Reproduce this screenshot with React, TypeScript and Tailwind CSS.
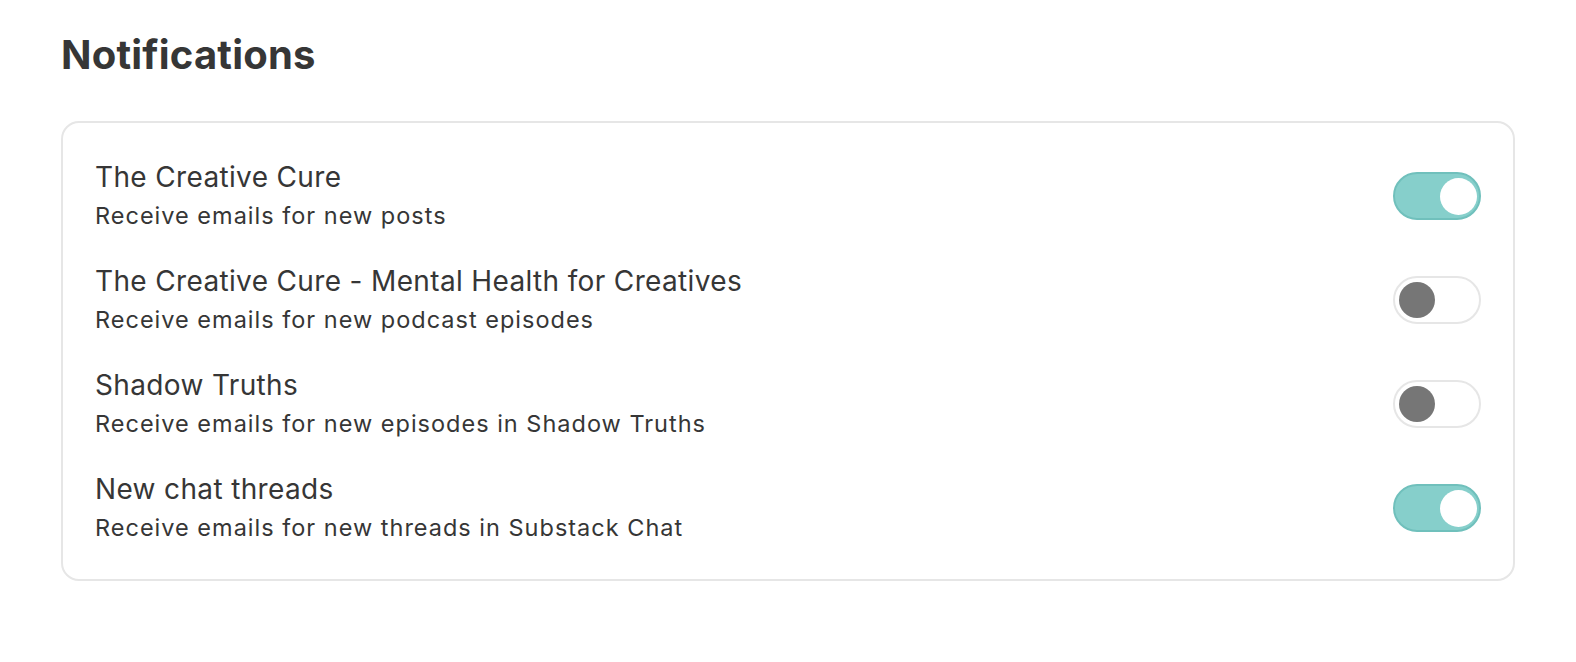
import React from "react";

type Item = { title: string; sub: string; on: boolean };

const items: Item[] = [
  { title: "The Creative Cure", sub: "Receive emails for new posts", on: true },
  { title: "The Creative Cure - Mental Health for Creatives", sub: "Receive emails for new podcast episodes", on: false },
  { title: "Shadow Truths", sub: "Receive emails for new episodes in Shadow Truths", on: false },
  { title: "New chat threads", sub: "Receive emails for new threads in Substack Chat", on: true },
];

function Toggle({ on }: { on: boolean }) {
  return on ? (
    <div className="flex h-[48px] w-[88px] shrink-0 items-center justify-end rounded-full border-2 border-[#70c0bc] bg-[#86cfcb] pr-[2px]">
      <div className="h-[37px] w-[37px] rounded-full bg-white" />
    </div>
  ) : (
    <div className="flex h-[48px] w-[88px] shrink-0 items-center justify-start rounded-full border-2 border-[#e6e6e6] bg-white pl-[4px]">
      <div className="h-[36px] w-[36px] rounded-full bg-[#767676]" />
    </div>
  );
}

export default function App() {
  return (
    <div
      className="min-h-[662px] w-full bg-white px-[61px] pt-[31px] text-[#363636]"
      style={{ fontFamily: "Inter, 'Noto Sans', sans-serif" }}
    >
      <h1 className="text-[40px] font-bold leading-[48px] tracking-[0.2px] text-[#363636]">Notifications</h1>
      <div className="mt-[42px] flex flex-col gap-[26px] rounded-[18px] border-2 border-[#e6e6e6] px-[32px] pb-[32px] pt-[34px]">
        {items.map((it) => (
          <div key={it.title} className="flex items-center justify-between">
            <div className="flex flex-col">
              <div className="text-[28px] leading-[40px] tracking-[0.35px] text-[#363636]">{it.title}</div>
              <div className="text-[23.5px] leading-[38px] tracking-[1px] text-[#363636]">{it.sub}</div>
            </div>
            <Toggle on={it.on} />
          </div>
        ))}
      </div>
    </div>
  );
}
